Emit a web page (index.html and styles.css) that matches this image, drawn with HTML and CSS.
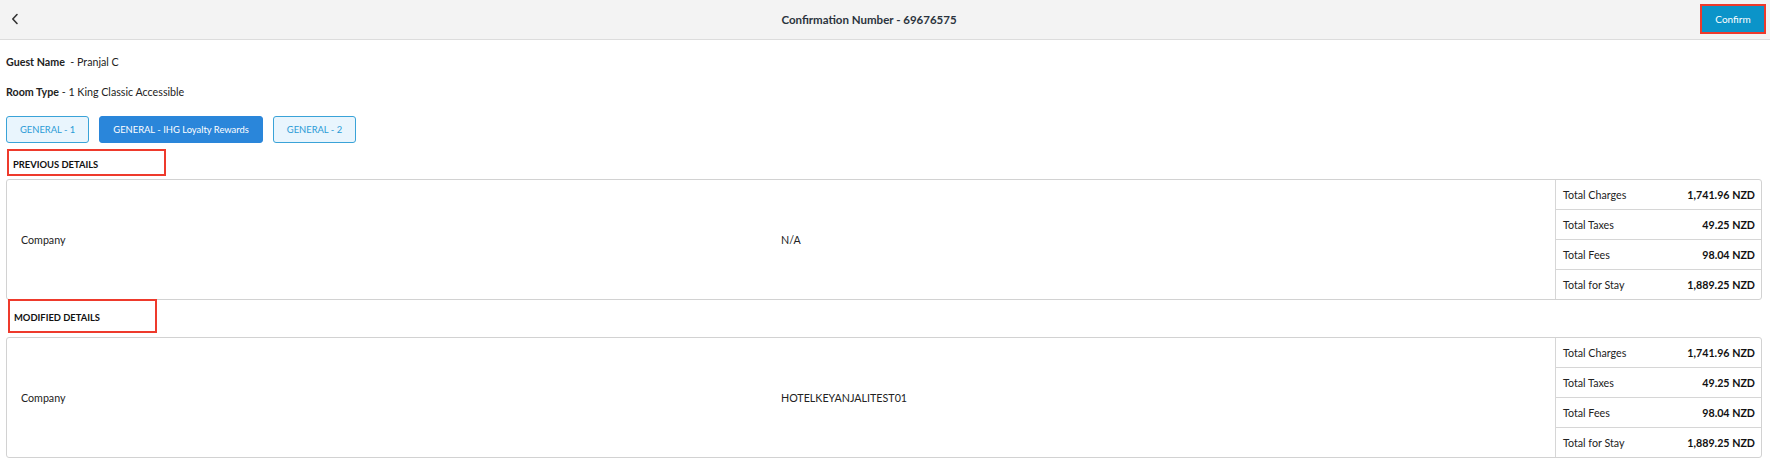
FILE: index.html
```html
<!DOCTYPE html>
<html lang="en">
<head>
<meta charset="utf-8">
<title>Confirmation Number - 69676575</title>
<link rel="stylesheet" href="styles.css">
</head>
<body>
<header class="topbar">
  <div class="topbar-left">
    <button class="back-btn" aria-label="Back">
      <svg width="8" height="12" viewBox="0 0 8 12"><path d="M6 1.5 L1.8 6 L6 10.5" fill="none" stroke="#333" stroke-width="1.6" stroke-linecap="round" stroke-linejoin="round"/></svg>
    </button>
  </div>
  <div class="topbar-title">Confirmation Number - 69676575</div>
  <div class="topbar-right">
    <button class="confirm-btn">Confirm</button>
  </div>
</header>

<main class="content">
  <div class="info-line"><span class="info-label">Guest Name</span>&nbsp; - Pranjal C</div>
  <div class="info-line"><span class="info-label">Room Type</span> - 1 King Classic Accessible</div>

  <div class="tabs">
    <button class="tab">GENERAL - 1</button>
    <button class="tab tab-active">GENERAL - IHG Loyalty Rewards</button>
    <button class="tab">GENERAL - 2</button>
  </div>

  <h2 class="section-title section-prev">PREVIOUS DETAILS</h2>
  <div class="detail-table">
    <div class="cell-label">Company</div>
    <div class="cell-value">N/A</div>
    <div class="totals">
      <div class="total-row"><span>Total Charges</span><b>1,741.96 NZD</b></div>
      <div class="total-row"><span>Total Taxes</span><b>49.25 NZD</b></div>
      <div class="total-row"><span>Total Fees</span><b>98.04 NZD</b></div>
      <div class="total-row"><span>Total for Stay</span><b>1,889.25 NZD</b></div>
    </div>
  </div>

  <h2 class="section-title section-mod">MODIFIED DETAILS</h2>
  <div class="detail-table">
    <div class="cell-label">Company</div>
    <div class="cell-value">HOTELKEYANJALITEST01</div>
    <div class="totals">
      <div class="total-row"><span>Total Charges</span><b>1,741.96 NZD</b></div>
      <div class="total-row"><span>Total Taxes</span><b>49.25 NZD</b></div>
      <div class="total-row"><span>Total Fees</span><b>98.04 NZD</b></div>
      <div class="total-row"><span>Total for Stay</span><b>1,889.25 NZD</b></div>
    </div>
  </div>
</main>
</body>
</html>
```

FILE: styles.css
```css
* { box-sizing: border-box; }

body {
  margin: 0;
  background: #fff;
  font-family: Lato, "Open Sans", Arial, sans-serif;
  color: #222;
  font-size: 10.7px;
}

button { font-family: inherit; cursor: pointer; }

/* top bar */
.topbar {
  display: flex;
  align-items: center;
  height: 40px;
  background: #f3f3f3;
  border-bottom: 1px solid #dcdcdc;
}
.topbar-left {
  width: 40px;
  display: flex;
  align-items: center;
  padding-left: 10px;
}
.back-btn {
  border: 0;
  background: none;
  padding: 0;
  width: 10px;
  height: 14px;
  display: flex;
  align-items: center;
  justify-content: center;
  margin-top: -1px;
}
.topbar-title {
  flex: 1;
  text-align: center;
  font-size: 11.5px;
  font-weight: 700;
  color: #2b333d;
}
.topbar-right {
  width: 72px;
  display: flex;
  justify-content: flex-end;
  padding-right: 4px;
  align-self: flex-start;
  padding-top: 4px;
}
.confirm-btn {
  width: 66px;
  height: 30px;
  background: #0b94c9;
  color: #fff;
  border: 2px solid #ee3a2c;
  font-size: 10px;
  padding: 0;
}

/* body content */
.content {
  padding: 0 8px 0 6px;
}
.info-line {
  height: 30px;
  line-height: 30px;
  font-size: 10.7px;
  color: #222;
}
.info-line:first-child { margin-top: 7px; }
.info-label { font-weight: 700; }

.tabs {
  display: flex;
  gap: 10px;
  margin-top: 9px;
}
.tab {
  height: 27px;
  padding: 0 13px;
  font-size: 9.4px;
  border-radius: 3px;
  border: 1px solid #3aa3d8;
  background: #e9f5fd;
  color: #2a9bd6;
}
.tab-active {
  background: #2a86da;
  border-color: #2a86da;
  color: #fff;
}

.section-title {
  margin: 0;
  border: 2px solid #ee3a2c;
  font-size: 9.4px;
  font-weight: 700;
  color: #111;
  padding-left: 4px;
  display: flex;
  align-items: center;
}
.section-prev {
  width: 159px;
  height: 27px;
  padding-top: 3px;
  margin: 6px 0 3px 1px;
}
.section-mod {
  width: 149px;
  height: 34px;
  padding-top: 2px;
  margin: -1px 0 4px 2px;
}

/* details grid */
.detail-table {
  display: grid;
  grid-template-columns: 1fr 1fr 206px;
  border: 1px solid #d2d2d2;
  border-radius: 3px;
}
.cell-label, .cell-value {
  display: flex;
  align-items: center;
  font-size: 10.7px;
}
.cell-label { padding-left: 14px; }
.cell-value { padding-left: 0; }

.totals {
  border-left: 1px solid #d6d6d6;
}
.total-row {
  display: flex;
  justify-content: space-between;
  align-items: center;
  height: 30px;
  padding: 0 6px 0 7px;
  border-bottom: 1px solid #d6d6d6;
  font-size: 10.7px;
}
.total-row:last-child { border-bottom: 0; height: 29px; }
.total-row b { font-weight: 700; color: #111; }
```
